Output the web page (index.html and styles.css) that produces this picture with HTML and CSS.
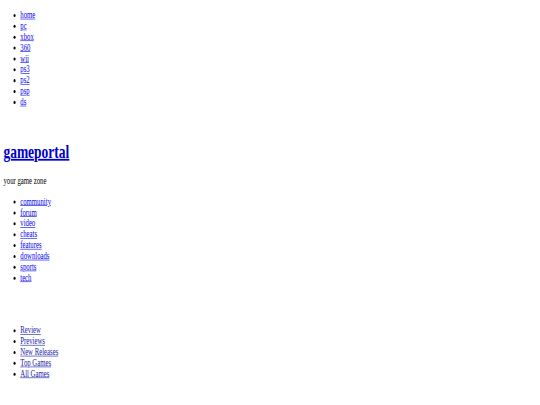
FILE: index.html
```html
<!DOCTYPE html>
<html>
<head>
<meta charset="utf-8">
<title>gameportal</title>
<link rel="stylesheet" href="styles.css">
</head>
<body>
<div class="page">
  <ul class="nav platforms">
    <li><a href="#">home</a></li>
    <li><a href="#">pc</a></li>
    <li><a href="#">xbox</a></li>
    <li><a href="#">360</a></li>
    <li><a href="#">wii</a></li>
    <li><a href="#">ps3</a></li>
    <li><a href="#">ps2</a></li>
    <li><a href="#">psp</a></li>
    <li><a href="#">ds</a></li>
  </ul>
  <div class="spacer-a"></div>
  <h1 class="logo"><a href="#">gameportal</a></h1>
  <p class="tagline">your game zone</p>
  <ul class="nav sections">
    <li><a href="#">community</a></li>
    <li><a href="#">forum</a></li>
    <li><a href="#">video</a></li>
    <li><a href="#">cheats</a></li>
    <li><a href="#">features</a></li>
    <li><a href="#">downloads</a></li>
    <li><a href="#">sports</a></li>
    <li><a href="#">tech</a></li>
  </ul>
  <div class="spacer-b"></div>
  <ul class="nav catalog">
    <li><a href="#">Review</a></li>
    <li><a href="#">Previews</a></li>
    <li><a href="#">New Releases</a></li>
    <li><a href="#">Top Games</a></li>
    <li><a href="#">All Games</a></li>
  </ul>
</div>
</body>
</html>
```

FILE: styles.css
```css
html, body {
  margin: 0;
  padding: 0;
  width: 540px;
  height: 405px;
  background: #ffffff;
  overflow: hidden;
}

.page {
  width: 1264px;
  height: 640px;
  padding: 16px 8px 0 8px;
  font-family: "Liberation Serif", "Times New Roman", serif;
  font-size: 16px;
  color: #000000;
  transform: scale(0.4219, 0.604);
  transform-origin: 0 0;
}

.nav {
  margin: 0;
  padding-left: 40px;
  list-style: disc;
}

.nav a {
  color: #0000ee;
  text-decoration: underline;
}

.catalog a {
  color: #1a1aa8;
}

.spacer-a {
  height: 33px;
}

.logo {
  margin: 21.44px 0;
  font-size: 32px;
  font-weight: bold;
}

.logo a {
  color: #0000cc;
}

.tagline {
  margin: 0 0 16px 0;
}

.spacer-b {
  height: 69px;
}
```
